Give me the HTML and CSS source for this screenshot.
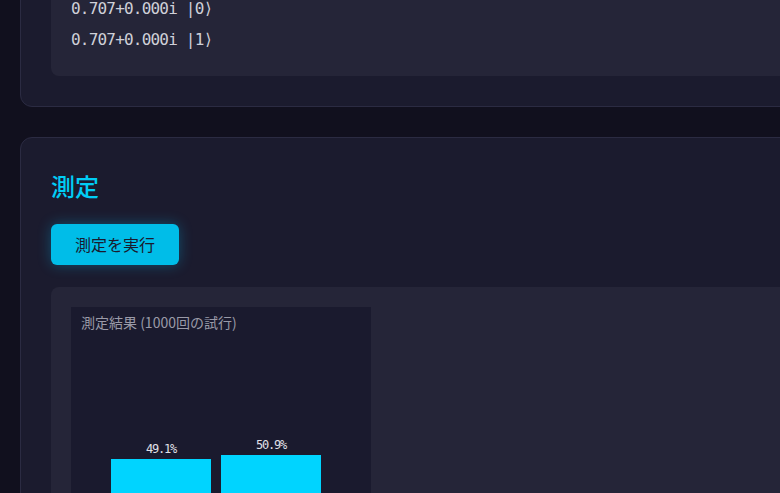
FILE: index.html
```html
<!DOCTYPE html>
<html lang="ja">
<head>
<meta charset="utf-8">
<title>量子シミュレータ</title>
<link rel="stylesheet" href="styles.css">
</head>
<body>
<div class="page">
  <section class="card card-state">
    <div class="panel state-panel">
      <div class="amp">0.707+0.000i |0⟩</div>
      <div class="amp">0.707+0.000i |1⟩</div>
    </div>
  </section>

  <section class="card">
    <h2 class="card-title">測定</h2>
    <button class="btn">測定を実行</button>
    <div class="panel result-panel">
      <div class="chart">
        <div class="chart-title">測定結果 (1000回の試行)</div>
        <div class="bars">
          <div class="bar-col">
            <span class="bar-label">49.1%</span>
            <div class="bar" style="height:109px"></div>
          </div>
          <div class="bar-col">
            <span class="bar-label">50.9%</span>
            <div class="bar" style="height:113px"></div>
          </div>
        </div>
      </div>
    </div>
  </section>
</div>
</body>
</html>
```
FILE: styles.css
```css
html, body {
  margin: 0;
  padding: 0;
  overflow: hidden;
  background: #11101e;
}
body {
  font-family: "Noto Sans CJK JP", "Noto Sans", sans-serif;
  color: #e0e0e8;
}
.page {
  width: 1040px;
  padding: 0 20px;
}
.card {
  background: #1b1b2e;
  border: 1px solid #2b2b42;
  border-radius: 12px;
  padding: 30px;
  margin-bottom: 30px;
}
.card-state {
  margin-top: -58px;
}
.panel {
  background: #252538;
  border-radius: 8px;
  padding: 20px;
}
.state-panel {
  padding-bottom: 21px;
}
.amp {
  font-family: "DejaVu Sans Mono", monospace;
  font-size: 16px;
  letter-spacing: -0.8px;
  line-height: 23px;
  padding: 4px 0;
  color: #cfd0d8;
}
.card-title {
  margin: 0 0 20px;
  font-size: 24px;
  line-height: 36px;
  font-weight: 500;
  color: #00cdf5;
}
.btn {
  display: block;
  font-family: "Noto Sans CJK JP", sans-serif;
  font-size: 16px;
  line-height: 25px;
  padding: 8px 24px;
  border: 0;
  border-radius: 6px;
  background: #00bde8;
  color: #1a1a2e;
  box-shadow: 0 0 14px rgba(0, 200, 255, 0.3);
  margin-bottom: 22px;
}
.result-panel {
  height: 400px;
}
.chart {
  width: 300px;
  height: 300px;
  background: #1a1a2e;
  display: flex;
  flex-direction: column;
}
.chart-title {
  font-family: "Noto Sans CJK JP", sans-serif;
  font-size: 14px;
  line-height: 18px;
  color: #9a9aa8;
  padding: 6px 10px 0;
}
.bars {
  flex: 1;
  display: flex;
  align-items: flex-end;
  gap: 10px;
  padding: 0 0 39px 40px;
}
.bar-col {
  display: flex;
  flex-direction: column;
  align-items: center;
  width: 100px;
}
.bar-label {
  font-family: "DejaVu Sans Mono", monospace;
  font-size: 12px;
  letter-spacing: -1.2px;
  line-height: 12px;
  color: #e0e0e8;
  margin-bottom: 4px;
}
.bar {
  width: 100px;
  background: #00d4ff;
}
```
